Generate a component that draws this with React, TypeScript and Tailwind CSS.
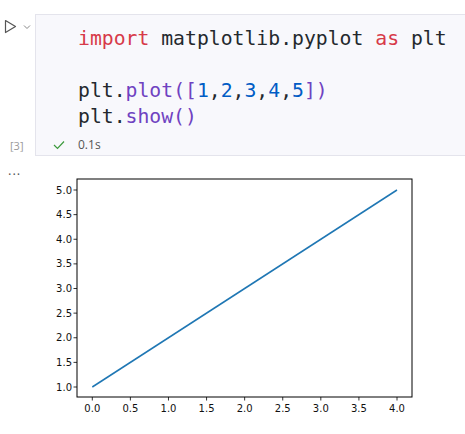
const YTICKS = [1.0, 1.5, 2.0, 2.5, 3.0, 3.5, 4.0, 4.5, 5.0]
const XTICKS = [0.0, 0.5, 1.0, 1.5, 2.0, 2.5, 3.0, 3.5, 4.0]

// page coords of the axes
const AX = { left: 77, right: 412, top: 178, bottom: 396 }
const xPos = (v: number) => 92.3 + (v / 4) * (397 - 92.3)
const yPos = (v: number) => 386 - ((v - 1) / 4) * (386 - 189)

function Plot() {
  return (
    <svg width={430} height={264} className="block" style={{ fontFamily: '"DejaVu Sans", sans-serif' }}>
      <g transform="translate(-35,-160)">
        <rect x={AX.left} y={AX.top} width={AX.right - AX.left} height={AX.bottom - AX.top} fill="#fff" stroke="#000" strokeWidth={1} />
        <polyline points={`${xPos(0)},${yPos(1)} ${xPos(4)},${yPos(5)}`} fill="none" stroke="#1f77b4" strokeWidth={1.5} />
        {YTICKS.map((t) => (
          <g key={t}>
            <line x1={AX.left - 3.5} x2={AX.left} y1={yPos(t)} y2={yPos(t)} stroke="#000" strokeWidth={0.8} />
            <text x={72} y={yPos(t) + 3.5} textAnchor="end" fontSize={10} fill="#111">
              {t.toFixed(1)}
            </text>
          </g>
        ))}
        {XTICKS.map((t) => (
          <g key={t}>
            <line x1={xPos(t)} x2={xPos(t)} y1={AX.bottom} y2={AX.bottom + 3.5} stroke="#000" strokeWidth={0.8} />
            <text x={xPos(t)} y={411} textAnchor="middle" fontSize={10} fill="#111">
              {t.toFixed(1)}
            </text>
          </g>
        ))}
      </g>
    </svg>
  )
}

export default function App() {
  return (
    <div className="w-[465px] h-[434px] bg-white overflow-hidden font-['Open_Sans',sans-serif]">
      <div className="flex pt-[14px]">
        {/* Gutter */}
        <div className="w-[35px] shrink-0 flex flex-col justify-between">
          <div className="flex items-start pt-[5px] pl-[4px] gap-[6px]">
            <svg width="13" height="15" viewBox="0 0 13 15">
              <path d="M1.5 1.5 L11.5 7.5 L1.5 13.5 Z" fill="none" stroke="#555" strokeWidth="1.2" strokeLinejoin="round" />
            </svg>
            <svg width="8" height="6" viewBox="0 0 8 6" className="mt-[5px]">
              <path d="M1 1.5 L4 4.5 L7 1.5" fill="none" stroke="#888" strokeWidth="1" />
            </svg>
          </div>
          <div className="h-[20px] flex items-center pl-[10px] text-[11px] text-[#9a9a9a]">[3]</div>
        </div>

        {/* Cell */}
        <div className="flex-1 bg-[#f8f8fc] border-y border-l border-[#e4e4ec]">
          <div className="pt-[11px] pl-[42px] font-['DejaVu_Sans_Mono',monospace] text-[19.75px] leading-[26px] text-[#24292e] whitespace-pre">
            <div>
              <span className="text-[#d73a49]">import</span> matplotlib.pyplot <span className="text-[#d73a49]">as</span> plt
            </div>
            <div>&nbsp;</div>
            <div>
              plt.<span className="text-[#6f42c1]">plot</span>
              <span className="text-[#6f42c1]">([</span>
              <span className="text-[#005cc5]">1</span>,<span className="text-[#005cc5]">2</span>,<span className="text-[#005cc5]">3</span>,<span className="text-[#005cc5]">4</span>,<span className="text-[#005cc5]">5</span>
              <span className="text-[#6f42c1]">])</span>
            </div>
            <div>
              plt.<span className="text-[#6f42c1]">show()</span>
            </div>
          </div>
          <div className="h-[20px] mt-[5px] flex items-center text-[12px] text-[#555]">
            <svg width="12" height="10" viewBox="0 0 12 10" className="ml-[17px]">
              <path d="M1 5 L4.5 8.5 L11 1.5" fill="none" stroke="#3c9a3c" strokeWidth="1.2" />
            </svg>
            <span className="ml-[13px]">0.1s</span>
          </div>
        </div>
      </div>

      {/* Output */}
      <div className="flex mt-[5px]">
        <div className="w-[35px] shrink-0 pl-[8px] pt-[6px] text-[13px] leading-[14px] text-[#555] tracking-[1px]">···</div>
        <Plot />
      </div>
    </div>
  )
}
